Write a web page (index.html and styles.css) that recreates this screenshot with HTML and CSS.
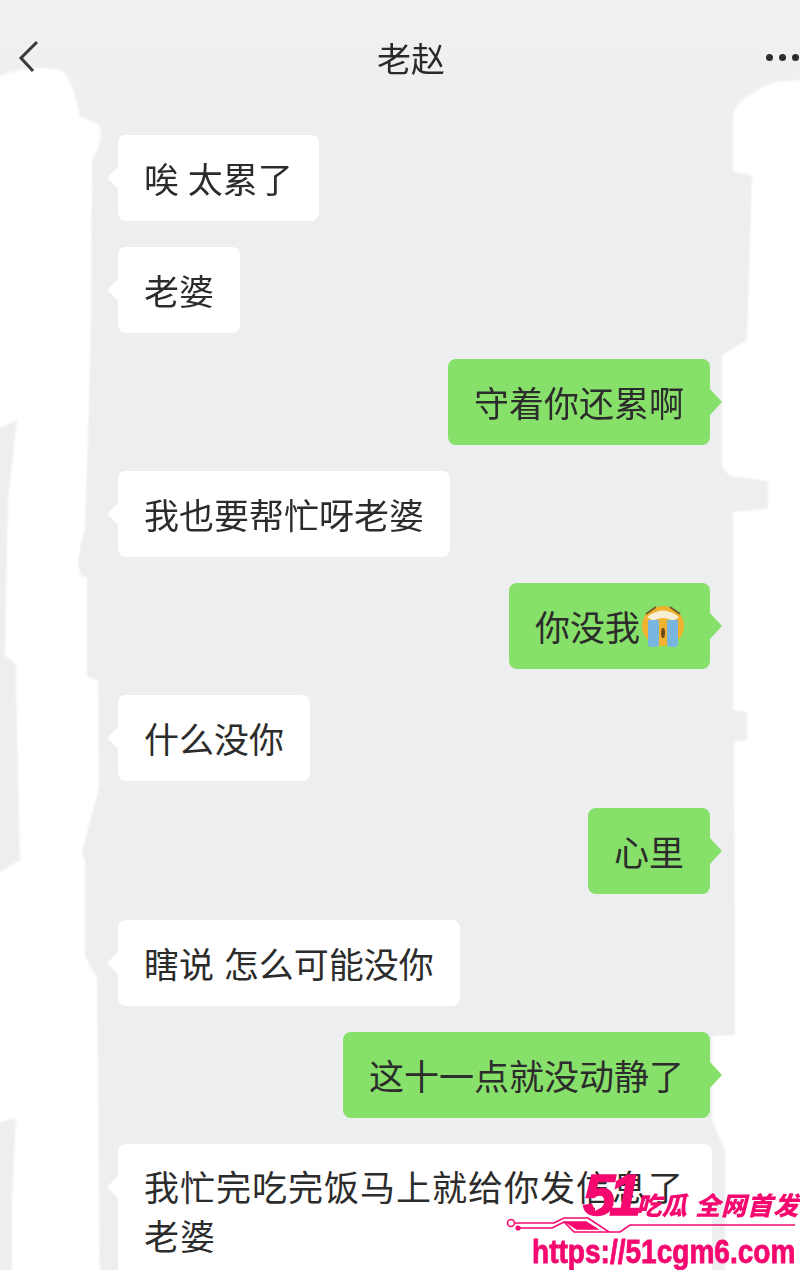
FILE: index.html
```html
<!DOCTYPE html>
<html lang="zh-CN">
<head>
<meta charset="utf-8">
<title>老赵</title>
<link rel="stylesheet" href="styles.css">
</head>
<body>
<div class="phone">
  <svg class="redactions" width="800" height="1270" viewBox="0 0 800 1270" aria-hidden="true">
    <path class="blot" d="M-20 78 L0 76 Q30 64 60 70 Q72 76 80 116 L98 124 Q106 136 92 160 L91 320 L88 440 L85 526 L78 560 L80 575 L87 578 L87 677 L98 680 L99 787 L82 853 L85 860 L85 956 L97 978 L100 1300 L-20 1300 Z"/>
    <path class="gap" d="M-20 428 L0 428 L17 420 L8 500 L6 600 L5 655 L16 665 L17 735 L20 860 L0 872 L-20 872 Z"/>
    <path class="gap" d="M-20 1122 L0 1122 L16 1118 L12 1200 L12 1300 L-20 1300 Z"/>
    <path class="blot" d="M820 78 L775 82 Q760 88 745 98 Q733 106 733 118 L733 172 L752 175 L747 340 L722 355 L722 467 L730 476 L768 481 L768 509 L733 512 L733 710 L747 712 L747 740 L734 742 L735 1035 L712 1036 L712 1120 L725 1150 L725 1300 L820 1300 Z"/>
  </svg>

  <header class="topbar">
    <svg class="back" width="24" height="36" viewBox="0 0 24 36" aria-hidden="true"><path d="M19 2 L3 18 L15 31"/></svg>
    <h1 class="title">老赵</h1>
    <div class="more" aria-hidden="true"><i></i><i></i><i></i></div>
  </header>

  <main class="chat">
    <div class="msg in"><span class="words spaced-s">唉 太累了</span></div>
    <div class="msg in"><span class="words">老婆</span></div>
    <div class="msg out"><span class="words">守着你还累啊</span></div>
    <div class="msg in"><span class="words">我也要帮忙呀老婆</span></div>
    <div class="msg out"><span class="words">你没我</span><svg class="emoji" width="42" height="44" viewBox="0 0 42 44" aria-hidden="true"><ellipse cx="21" cy="23" rx="21" ry="20" fill="#f1b32f"/><path d="M4 11 L14 4 M38 11 L28 4" stroke="#6d5c2c" stroke-width="2"/><path d="M5 14 Q21 1 37 14 L31 18 Q21 12 11 18 Z" fill="#f6efd6"/><path d="M6 17 H17 V41 Q17 44 13 44 H9 Q6 44 6 40 Z M25 17 H36 V40 Q36 44 33 44 H29 Q25 44 25 41 Z" fill="#79b5df"/><ellipse cx="21" cy="30" rx="2" ry="5" fill="#6b4a1a"/></svg></div>
    <div class="msg in"><span class="words">什么没你</span></div>
    <div class="msg out step"><span class="words">心里</span></div>
    <div class="msg in"><span class="words spaced">瞎说 怎么可能没你</span></div>
    <div class="msg out"><span class="words">这十一点就没动静了</span></div>
    <div class="msg in wide"><span class="words">我忙完吃完饭马上就给你发信息了<br>老婆</span></div>
  </main>

  <div class="watermark">
    <div class="wm-top"><span class="wm-51">51</span><span class="wm-slogan">吃瓜</span><span class="wm-slogan wm-second">全网首发</span></div>
    <i class="wm-play"></i>
    <svg class="wm-circuit" width="296" height="24" viewBox="0 0 296 24" aria-hidden="true">
      <circle cx="7" cy="6" r="3.5"/>
      <circle cx="14" cy="11" r="1.8" class="dot"/>
      <path d="M11 6 H50 L60 1 H84 L105 15 H116 L126 8 H291 M16 11 H48 L60 5 L70 15 H105"/>
      <path class="dot" d="M62 5 H82 L93 12 H73 Z"/>
    </svg>
    <div class="wm-url">https://51cgm6.com</div>
  </div>
</div>
</body>
</html>
```
FILE: styles.css
```css
* { box-sizing: border-box; }

html, body {
  margin: 0;
  padding: 0;
}

.phone {
  position: relative;
  width: 800px;
  height: 1270px;
  overflow: hidden;
  background: linear-gradient(#f0f0f0 0, #eeeeee 220px, #eceef0 420px, #eceef0 100%);
  font-family: "Noto Sans CJK SC", "Noto Sans", sans-serif;
  color: #2c2c2c;
}

.redactions {
  position: absolute;
  left: 0;
  top: 0;
  overflow: visible;
  filter: blur(1.2px);
}

.blot { fill: #ffffff; }
.gap { fill: #eceef0; }

.topbar {
  position: relative;
  display: flex;
  align-items: center;
  justify-content: center;
  height: 116px;
  padding-left: 22px;
  filter: blur(0.4px);
}

.title {
  margin: 0;
  font-size: 34px;
  font-weight: 400;
  line-height: 50px;
  color: #2a2a2a;
}

.back {
  position: absolute;
  left: 18px;
  top: 40px;
  fill: none;
  stroke: #3a3a3a;
  stroke-width: 3;
}

.more {
  position: absolute;
  left: 766px;
  top: 54px;
  display: flex;
  gap: 6px;
}

.more i {
  width: 7px;
  height: 7px;
  border-radius: 50%;
  background: #2e2e2e;
}

.chat {
  position: relative;
  display: flex;
  flex-direction: column;
  gap: 26px;
  padding: 19px 90px 0 118px;
  filter: blur(0.4px);
}

.msg {
  position: relative;
  display: flex;
  align-items: center;
  min-height: 86px;
  padding: 17px 26px 19px;
  border-radius: 8px;
  font-size: 35px;
  line-height: 49px;
  white-space: nowrap;
}

.msg::after {
  content: "";
  position: absolute;
  top: 50%;
  border-style: solid;
  border-color: transparent;
}

.in {
  align-self: flex-start;
  background: #ffffff;
}

.in::after {
  right: 100%;
  margin-top: -11px;
  border-width: 11px 11px 11px 0;
  border-right-color: #ffffff;
}

.out {
  align-self: flex-end;
  background: #87e069;
}

.out::after {
  left: 100%;
  margin-top: -13px;
  border-width: 13px 0 13px 12px;
  border-left-color: #87e069;
}

.step { margin-top: 1px; }

.spaced { word-spacing: 2px; }
.spaced-s { word-spacing: 1px; }

.wide {
  display: block;
  width: 594px;
  letter-spacing: 1px;
}

.wide::after { top: 43px; }

.emoji { margin-left: 2px; }

.watermark {
  position: absolute;
  left: 504px;
  top: 1170px;
  width: 296px;
  height: 100px;
  color: #f5086f;
}

.wm-top {
  display: flex;
  align-items: flex-end;
  height: 51px;
  margin-bottom: -4px;
  padding-left: 79px;
  font-style: italic;
  font-weight: 700;
  white-space: nowrap;
}

.wm-51 {
  flex: none;
  width: 53px;
  font-family: "Liberation Sans", sans-serif;
  font-size: 58px;
  line-height: 52px;
  letter-spacing: -6px;
  -webkit-text-stroke: 1.5px #f5086f;
}

.wm-slogan {
  flex: none;
  font-size: 25.5px;
  line-height: 34px;
  font-weight: 900;
}

.wm-second {
  margin-left: 8px;
  letter-spacing: 0.5px;
}

.wm-play {
  position: absolute;
  left: 91px;
  top: 33px;
  border-style: solid;
  border-width: 4px 0 4px 7px;
  border-color: transparent transparent transparent #ffffff;
}

.wm-circuit {
  display: block;
  fill: none;
  stroke: #f5086f;
  stroke-width: 1.6;
}

.wm-circuit .dot { fill: #f5086f; }

.wm-url {
  margin-top: -6px;
  margin-left: 28px;
  width: 268px;
  font-family: "Liberation Sans", sans-serif;
  font-size: 33px;
  font-weight: 700;
  line-height: 34px;
  -webkit-text-stroke: 0.8px #f5086f;
  white-space: nowrap;
  transform: scaleX(0.85);
  transform-origin: left top;
}
```
